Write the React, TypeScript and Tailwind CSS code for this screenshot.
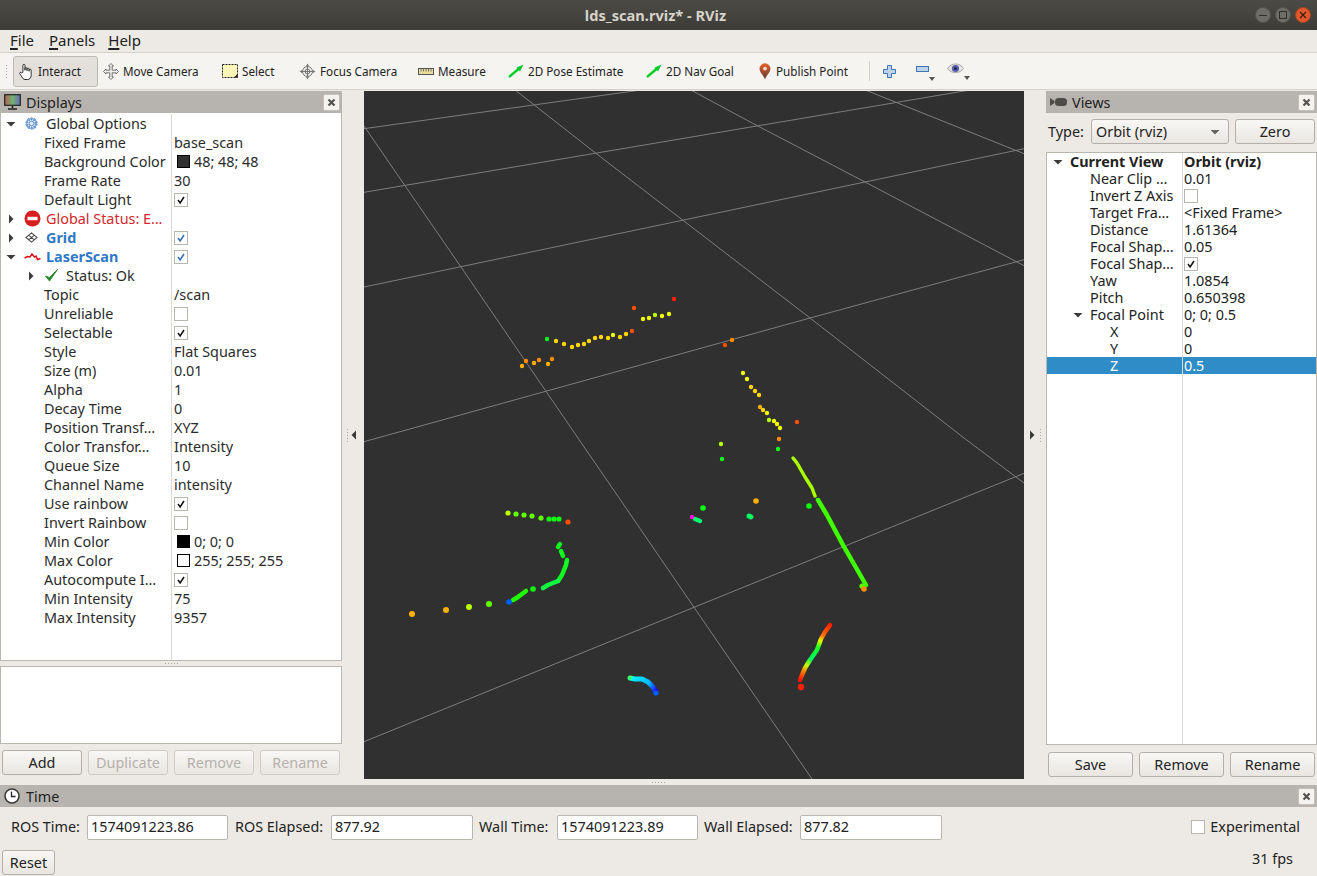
import { ReactNode } from 'react';

// colours of the laser points, picked off the screenshot
const C: Record<string, string> = {
  r: '#ff2000', R: '#ff5000', o: '#ff8c00', a: '#ffb000', y: '#ffd800', Y: '#f0ff00',
  l: '#b8ff00', g: '#60ff00', G: '#10ff10', t: '#00ff60', c: '#00e0ff', b: '#0060ff', m: '#ff10e0',
};

type Pt = [number, number, string, number?];

const scanPoints: Pt[] = [
  // top wall
  [547, 339, 'G'], [556, 341, 'y'], [564, 344, 'y'], [572, 347, 'y'], [578, 345, 'y'], [584, 344, 'y'], [589, 341, 'y'],
  [595, 338, 'y'], [601, 337, 'y'], [608, 338, 'y'], [613, 335, 'Y'], [620, 337, 'y'], [626, 334, 'y'], [632, 331, 'R'],
  [634, 308, 'R'], [674, 299, 'r'], [643, 319, 'Y'], [649, 318, 'Y'], [655, 315, 'l'], [662, 316, 'Y'], [669, 314, 'Y'],
  [522, 366, 'a'], [526, 361, 'o'], [534, 363, 'a'], [539, 360, 'o'], [548, 364, 'a'], [552, 359, 'o'],
  [725, 345, 'R'], [732, 340, 'o'],
  // right wall upper
  [743, 373, 'Y'], [747, 379, 'Y'], [751, 387, 'y'], [755, 391, 'y'], [759, 395, 'y'], [760, 407, 'a'], [763, 410, 'y'],
  [767, 413, 'Y'], [769, 420, 'l'], [774, 421, 'Y'], [777, 424, 'Y'], [780, 428, 'Y'], [797, 422, 'R'], [779, 439, 'o'], [778, 449, 'G'],
  [721, 444, 'l'], [722, 459, 'G'], [756, 501, 'a', 2.8], [809, 506, 'G', 2.8], [703, 508, 'G', 2.8],
  [862, 586, 'g', 2.6], [864, 589, 'o', 2.8],
  // left cluster
  [508, 513, 'l', 2.6], [516, 514, 'g', 2.6], [524, 515, 'g', 2.6], [532, 516, 'g', 2.6], [541, 518, 'g', 2.6], [549, 519, 'G', 2.6],
  [554, 519, 'G', 2.6], [559, 519, 'G', 2.6], [568, 522, 'R', 2.6],
  [533, 589, 'G', 2.8], [509, 602, 'b', 2.8], [489, 604, 'g', 3], [469, 607, 'l', 3], [446, 610, 'a', 3], [412, 614, 'a', 3],
  [692, 517, 'm', 2.2], [801, 687, 'r', 3.2], [656, 693, 'b', 2.6],
];

const scanLines: { pts: string; color: string; w: number }[] = [
  { pts: '793,458 797,463 805,477 812,488 815,496', color: '#a8ff00', w: 3.5 },
  { pts: '818,500 827,515 843,545 866,585', color: '#40ff00', w: 4.5 },
  { pts: '695,519 700,521', color: '#00ff70', w: 4.5 },
  { pts: '749,516 751,517', color: '#00ff60', w: 5 },
  { pts: '560,544 558,547', color: '#10ff20', w: 4.5 },
  { pts: '561,551 563,556', color: '#10ff20', w: 4.5 },
  { pts: '567,560 566,565 562,575 558,581', color: '#10ff20', w: 4.5 },
  { pts: '558,581 548,585 543,588', color: '#10ff40', w: 4.5 },
  { pts: '526,591 518,597 513,600', color: '#20ff00', w: 4.5 },
  { pts: '630,678 635,679 642,679 648,682 653,687 656,692', color: 'url(#arc)', w: 5 },
  { pts: '830,625 825,632 821,639 817,650 810,660 805,668 802,675 800,680', color: 'url(#rainbow)', w: 4.5 },
];

const gridLines = [
  '364,128.7 636,90.7',
  '364,192.3 966,90.7',
  '364,287 1024,148.7',
  '364,441.7 810,318 1024,259.7',
  '364,741.7 694,607.3 1024,473.3',
  '364,126 405,185.7 461,267 546,391.3 694,607.3 812,779',
  '516,90.7 596.4,153.7 683,220.3 810,318 964,438 1024,483',
  '692,90.7 758.4,126.3 865,182 1024,265.7',
  '867,90.7 1024,153.7',
];

const Viewport = () => (
  <div className="w-[660px] h-[688px] bg-[#303030] shrink-0">
    <svg className="block w-[660px] h-[688px]" viewBox="364 91 660 688">
      <defs>
        <linearGradient id="arc" gradientUnits="userSpaceOnUse" x1="630" y1="678" x2="656" y2="692">
          <stop offset="0" stopColor="#40ff60" />
          <stop offset="0.1" stopColor="#00f0ff" />
          <stop offset="0.65" stopColor="#00b8ff" />
          <stop offset="1" stopColor="#2000ff" />
        </linearGradient>
        <linearGradient id="rainbow" gradientUnits="userSpaceOnUse" x1="830" y1="625" x2="800" y2="680">
          <stop offset="0" stopColor="#ff2000" />
          <stop offset="0.2" stopColor="#ff7000" />
          <stop offset="0.3" stopColor="#e0ff00" />
          <stop offset="0.4" stopColor="#20ff20" />
          <stop offset="0.62" stopColor="#00ff60" />
          <stop offset="0.74" stopColor="#c0ff00" />
          <stop offset="0.85" stopColor="#ff8000" />
          <stop offset="1" stopColor="#ff1000" />
        </linearGradient>
      </defs>
      {gridLines.map((pts) => (
        <polyline key={pts} points={pts} fill="none" stroke="#7d7d7d" strokeWidth="1" />
      ))}
      {scanLines.map((l) => (
        <polyline key={l.pts} points={l.pts} fill="none" stroke={l.color} strokeWidth={l.w} strokeLinejoin="round" strokeLinecap="round" />
      ))}
      {scanPoints.map(([x, y, c, r = 2.2], i) => (
        <circle key={i} cx={x} cy={y} r={r} fill={C[c]} />
      ))}
    </svg>
  </div>
);

const Check = ({ color = '#111' }: { color?: string }) => (
  <svg className="w-[14px] h-[14px]" viewBox="0 0 14 14">
    <path d="M3.5 7 L6 10.5 L10.5 3.5" fill="none" stroke={color} strokeWidth="1.8" />
  </svg>
);

const CheckBox = ({ on, blue }: { on?: boolean; blue?: boolean }) => (
  <span className="w-[14px] h-[14px] bg-white border border-[#b9b6b0] flex items-center justify-center shrink-0">
    {on && <Check color={blue ? '#2f6fb5' : '#111'} />}
  </span>
);

const Swatch = ({ color }: { color: string }) => (
  <span className="w-[13px] h-[13px] border border-black shrink-0 mr-[4px] ml-[3px]" style={{ background: color }} />
);

const arrowPaths = {
  down: 'M0.5 3 H9.5 L5 7.5 z',
  right: 'M3 0.5 V9.5 L7.5 5 z',
  left: 'M7 0.5 V9.5 L2.5 5 z',
};

const Arrow = ({ dir = 'right', color = '#3c3c3c' }: { dir?: 'down' | 'right' | 'left'; color?: string }) => (
  <svg className="w-[10px] h-[10px] shrink-0" viewBox="0 0 10 10">
    <path d={arrowPaths[dir]} fill={color} />
  </svg>
);

const CloseBtn = () => (
  <span className="w-[17px] h-[17px] bg-[#f5f3f0] border border-[#c4c1bc] rounded-[2px] flex items-center justify-center shrink-0">
    <svg className="w-[9px] h-[9px]" viewBox="0 0 9 9">
      <path d="M1.5 1.5 L7.5 7.5 M7.5 1.5 L1.5 7.5" stroke="#55534f" strokeWidth="2.2" />
    </svg>
  </span>
);

const GearIcon = () => (
  <svg className="w-[15px] h-[15px]" viewBox="0 0 16 16">
    <circle cx="8" cy="8" r="5" fill="none" stroke="#4f82c4" strokeWidth="3" strokeDasharray="2 1.14" />
    <circle cx="8" cy="8" r="5.2" fill="none" stroke="#7ea6d8" strokeWidth="1.4" />
    <circle cx="8" cy="8" r="2.6" fill="#dbe7f5" stroke="#4f82c4" />
  </svg>
);

const ErrorIcon = () => (
  <svg className="w-[17px] h-[17px]" viewBox="0 0 17 17">
    <circle cx="8.5" cy="8.5" r="8" fill="#d71f1f" />
    <rect x="3.5" y="6.8" width="10" height="3.4" fill="#fff" />
  </svg>
);

const GridIcon = () => (
  <svg className="w-[15px] h-[15px]" viewBox="0 0 16 16">
    <path d="M8 3 L14 8 L8 13 L2 8 Z M5 5.5 L11 10.5 M11 5.5 L5 10.5" fill="none" stroke="#4a4a4a" strokeWidth="1.1" />
  </svg>
);

const ScanIcon = () => (
  <svg className="w-[17px] h-[15px]" viewBox="0 0 17 15">
    <path d="M0.5 9 L3.5 7.5 L6 8 L8 5 L10.5 8 L12 7 L13.5 10.5 L16.5 9.5" fill="none" stroke="#e01010" strokeWidth="1.5" />
  </svg>
);

const OkIcon = () => (
  <svg className="w-[15px] h-[15px]" viewBox="0 0 15 15">
    <path d="M1.5 8 L5.5 13 L13.5 1.5 L5.5 9.5 Z" fill="#2c8a30" stroke="#2c8a30" strokeWidth="1" strokeLinejoin="round" />
  </svg>
);

type DisplayRow = {
  label: string;
  value?: string;
  swatch?: string;
  check?: 'on' | 'off' | 'blue';
  arrow?: 'open' | 'closed';
  icon?: ReactNode;
  tone?: string;
  status?: boolean;
};

const displayRows: DisplayRow[] = [
  { label: 'Global Options', arrow: 'open', icon: <GearIcon /> },
  { label: 'Fixed Frame', value: 'base_scan' },
  { label: 'Background Color', value: '48; 48; 48', swatch: '#303030' },
  { label: 'Frame Rate', value: '30' },
  { label: 'Default Light', check: 'on' },
  { label: 'Global Status: E…', arrow: 'closed', icon: <ErrorIcon />, tone: 'text-[#d0282c]' },
  { label: 'Grid', arrow: 'closed', icon: <GridIcon />, tone: 'text-[#2f78c8] font-bold', check: 'blue' },
  { label: 'LaserScan', arrow: 'open', icon: <ScanIcon />, tone: 'text-[#2f78c8] font-bold', check: 'blue' },
  { label: 'Status: Ok', status: true, arrow: 'closed', icon: <OkIcon /> },
  { label: 'Topic', value: '/scan' },
  { label: 'Unreliable', check: 'off' },
  { label: 'Selectable', check: 'on' },
  { label: 'Style', value: 'Flat Squares' },
  { label: 'Size (m)', value: '0.01' },
  { label: 'Alpha', value: '1' },
  { label: 'Decay Time', value: '0' },
  { label: 'Position Transf…', value: 'XYZ' },
  { label: 'Color Transfor…', value: 'Intensity' },
  { label: 'Queue Size', value: '10' },
  { label: 'Channel Name', value: 'intensity' },
  { label: 'Use rainbow', check: 'on' },
  { label: 'Invert Rainbow', check: 'off' },
  { label: 'Min Color', value: '0; 0; 0', swatch: '#000000' },
  { label: 'Max Color', value: '255; 255; 255', swatch: '#ffffff' },
  { label: 'Autocompute I…', check: 'on' },
  { label: 'Min Intensity', value: '75' },
  { label: 'Max Intensity', value: '9357' },
];

const DisplayTreeRow = ({ row }: { row: DisplayRow }) => {
  const tone = row.tone ?? 'text-[#2b2b2b]';
  return (
    <div className="flex h-[19px] shrink-0 items-center whitespace-nowrap">
      <div className="w-[171px] h-full flex items-center border-r border-[#dcdad6] shrink-0 overflow-hidden">
        {row.status ? (
          <>
            <span className="w-[35px] flex justify-end shrink-0"><Arrow /></span>
            <span className="ml-[8px] w-[22px] shrink-0 flex justify-start">{row.icon}</span>
          </>
        ) : row.arrow ? (
          <>
            <span className="w-[15px] pl-[5px] shrink-0"><Arrow dir={row.arrow === 'open' ? 'down' : 'right'} /></span>
            <span className="ml-[8px] w-[22px] shrink-0">{row.icon}</span>
          </>
        ) : (
          <span className="w-[43px] shrink-0" />
        )}
        <span className={`${tone} pt-[2px]`}>{row.label}</span>
      </div>
      <div className="pl-[2px] flex items-center text-[#2b2b2b]">
        {row.swatch && <Swatch color={row.swatch} />}
        {row.value && <span className="pt-[2px]">{row.value}</span>}
        {row.check && <CheckBox on={row.check !== 'off'} blue={row.check === 'blue'} />}
      </div>
    </div>
  );
};

const viewRows: { label: string; value?: string; indent: number; check?: boolean; head?: boolean; open?: boolean; selected?: boolean }[] = [
  { label: 'Current View', value: 'Orbit (rviz)', indent: 23, head: true, open: true },
  { label: 'Near Clip …', value: '0.01', indent: 43 },
  { label: 'Invert Z Axis', indent: 43, check: false },
  { label: 'Target Fra…', value: '<Fixed Frame>', indent: 43 },
  { label: 'Distance', value: '1.61364', indent: 43 },
  { label: 'Focal Shap…', value: '0.05', indent: 43 },
  { label: 'Focal Shap…', indent: 43, check: true },
  { label: 'Yaw', value: '1.0854', indent: 43 },
  { label: 'Pitch', value: '0.650398', indent: 43 },
  { label: 'Focal Point', value: '0; 0; 0.5', indent: 43, open: true },
  { label: 'X', value: '0', indent: 63 },
  { label: 'Y', value: '0', indent: 63 },
  { label: 'Z', value: '0.5', indent: 63, selected: true },
];

const QtButton = ({ children, w, disabled }: { children: ReactNode; w: string; disabled?: boolean }) => (
  <span
    className={`${w} h-[25px] pt-[2px] rounded-[3px] border flex items-center justify-center shrink-0 bg-gradient-to-b from-[#f8f7f5] to-[#e9e6e1] ${
      disabled ? 'border-[#cfccc6] text-[#b4b1ac]' : 'border-[#b3b0a9] text-[#222]'
    }`}
  >
    {children}
  </span>
);

const PanelTitle = ({ icon, title, close = true }: { icon: ReactNode; title: string; close?: boolean }) => (
  <div className="h-[22px] bg-[#b7b3af] flex items-center pl-[3px] pr-[2px] shrink-0">
    <span className="w-[18px] flex justify-center shrink-0">{icon}</span>
    <span className="ml-[5px] flex-1 text-[#222] pt-[2px]">{title}</span>
    {close && <CloseBtn />}
  </div>
);

const ToolBtn = ({ icon, label, w, active, gap = 'gap-1' }: { icon: ReactNode; label: string; w: string; active?: boolean; gap?: string }) => (
  <div
    className={`${w} h-[31px] pl-[4px] flex items-center ${gap} shrink-0 whitespace-nowrap text-[11.7px] text-[#222] ${
      active ? 'bg-[#e3e0dc] border border-[#bcb9b3] rounded-[3px]' : 'border border-transparent'
    }`}
  >
    <span className="w-[16px] h-[16px] flex items-center justify-center shrink-0">{icon}</span>
    <span className="pt-[2px]">{label}</span>
  </div>
);

const HandIcon = () => (
  <svg className="w-[16px] h-[17px] shrink-0" viewBox="0.5 0 13 16.5">
    <path
      d="M4 9 V2.3 a1 1 0 0 1 2 0 V7 V5.5 a1 1 0 0 1 2 0 V7.5 V6 a1 1 0 0 1 2 0 V8 V7 a1 1 0 0 1 2 0 V12 c0 2.5-1.5 4-3.5 4 H6 c-1.5 0-2-1-3-2.5 L1 10.5 c-0.6-1 0.8-2 1.6-1 Z"
      fill="#fff"
      stroke="#222"
      strokeWidth="0.9"
    />
  </svg>
);

const MoveIcon = () => (
  <svg className="w-[16px] h-[17px] shrink-0" viewBox="0 0 16 17">
    <path
      d="M8 .5 L10.5 3 H9.2 V7.2 H13 V6 L15.5 8.5 L13 11 V9.8 H9.2 V14 H10.5 L8 16.5 L5.5 14 H6.8 V9.8 H3 V11 L.5 8.5 L3 6 V7.2 H6.8 V3 H5.5 Z"
      fill="#eeeeee"
      stroke="#555"
      strokeWidth="0.8"
    />
  </svg>
);

const SelectIcon = () => (
  <svg className="w-[16px] h-[14px]" viewBox="0 0 16 14">
    <rect x="0.5" y="0.5" width="15" height="13" fill="#fbf6b8" stroke="#222" strokeDasharray="2 1" />
    <path d="M12 13.5 L15.5 13.5 L15.5 10 Z" fill="#111" />
  </svg>
);

const FocusIcon = () => (
  <svg className="w-[17px] h-[17px] shrink-0" viewBox="0 0 17 17">
    <circle cx="8.5" cy="8.5" r="5" fill="#ececec" stroke="#777" />
    <circle cx="8.5" cy="8.5" r="2.4" fill="none" stroke="#777" />
    <path d="M8.5 .5 L10 3 H9 V14 H10 L8.5 16.5 L7 14 H8 V3 H7 Z M.5 8.5 L3 7 V8 H14 V7 L16.5 8.5 L14 10 V9 H3 V10 Z" fill="#777" />
  </svg>
);

const RulerIcon = () => (
  <svg className="w-[16px] h-[7px]" viewBox="0 0 16 7">
    <rect x="0.5" y="0.5" width="15" height="6" fill="#e9dc9f" stroke="#555" />
    <path d="M3 1 V3.5 M5.5 1 V3.5 M8 1 V3.5 M10.5 1 V3.5 M13 1 V3.5" stroke="#555" strokeWidth="0.8" />
  </svg>
);

const GreenArrow = () => (
  <svg className="w-[16px] h-[14px]" viewBox="0 0 16 14">
    <path d="M1 13 L11 4.5" stroke="#10e030" strokeWidth="2.6" />
    <path d="M15.5 0.5 L8.5 3.5 L12 7.5 Z" fill="#10c830" />
    <path d="M1 13 L10 5.5" stroke="#0a8a20" strokeWidth="0.6" />
  </svg>
);

const PinIcon = () => (
  <svg className="w-[12px] h-[17px] mr-[4px] shrink-0" viewBox="0 0 12 17">
    <defs>
      <linearGradient id="pin" x1="0" y1="0" x2="0" y2="1">
        <stop offset="0" stopColor="#e8602c" />
        <stop offset="1" stopColor="#5a4030" />
      </linearGradient>
    </defs>
    <path d="M6 16.5 C4.5 12 .5 9.5 .5 5.8 A5.5 5.5 0 0 1 11.5 5.8 C11.5 9.5 7.5 12 6 16.5 Z" fill="url(#pin)" />
    <circle cx="6" cy="5.6" r="1.9" fill="#f3d9c8" />
  </svg>
);

const MonitorIcon = () => (
  <svg className="w-[17px] h-[16px]" viewBox="0 0 17 16">
    <defs>
      <linearGradient id="screen" x1="0" y1="0" x2="1" y2="0">
        <stop offset="0" stopColor="#b85a5a" />
        <stop offset="0.5" stopColor="#6fb56f" />
        <stop offset="1" stopColor="#6a6ab8" />
      </linearGradient>
    </defs>
    <rect x="0.7" y="0.7" width="15.6" height="10.6" fill="url(#screen)" stroke="#222" strokeWidth="1.2" />
    <path d="M8.5 12 V14 M4 15 H13" stroke="#222" strokeWidth="1.6" />
  </svg>
);

const CameraIcon = () => (
  <svg className="w-[17px] h-[10px]" viewBox="0 0 17 10">
    <path d="M0 1 L4.5 4 V6 L0 9 Z" fill="#4d4c49" />
    <rect x="5" y="1" width="12" height="8" rx="3.5" fill="#4d4c49" />
  </svg>
);

const ClockIcon = () => (
  <svg className="w-[16px] h-[16px]" viewBox="0 0 16 16">
    <circle cx="8" cy="8" r="7" fill="#fff" stroke="#3a3a3a" strokeWidth="1.6" />
    <path d="M7.5 3.5 V8.5 H11.5" fill="none" stroke="#222" strokeWidth="1.3" />
  </svg>
);

const TimeField = ({ label, value, labelW, inputW }: { label: string; value: string; labelW: string; inputW: string }) => (
  <>
    <span className={`${labelW} shrink-0 text-[#222] whitespace-nowrap`}>{label}</span>
    <span className={`${inputW} h-[25px] shrink-0 bg-white border border-[#b9b6b0] rounded-[2px] pl-[3px] flex items-center text-[#222]`}>
      {value}
    </span>
  </>
);

const DragDots = ({ vertical }: { vertical?: boolean }) => (
  <span className={`flex ${vertical ? 'flex-col' : ''} gap-[2px]`}>
    {[0, 1, 2, 3, 4].map((i) => (
      <span key={i} className="w-px h-px bg-[#a9a6a0]" />
    ))}
  </span>
);

export default function App() {
  return (
    <div
      className="w-[1317px] h-[876px] overflow-hidden flex flex-col bg-[#edeae5] text-[14.4px] leading-none"
      style={{ fontFamily: '"Noto Sans", sans-serif' }}
    >
      {/* window title */}
      <div className="h-[30px] shrink-0 bg-gradient-to-b from-[#4d4b45] to-[#3d3c38] flex items-center">
        <div className="flex-1" />
        <span className="font-bold text-[14.6px] text-[#d6d3ca]">lds_scan.rviz* - RViz</span>
        <div className="flex-1 flex justify-end items-center gap-[4px] pr-[6px]">
          <span className="w-[16px] h-[16px] rounded-full bg-[#6e6d67] border border-[#55544f] flex items-center justify-center">
            <span className="w-[8px] h-px bg-[#2f2e2b]" />
          </span>
          <span className="w-[16px] h-[16px] rounded-full bg-[#6e6d67] border border-[#55544f] flex items-center justify-center">
            <span className="w-[8px] h-[8px] border border-[#2f2e2b]" />
          </span>
          <span className="w-[16px] h-[16px] rounded-full bg-[#e3582a] border border-[#a8441f] flex items-center justify-center">
            <svg className="w-[8px] h-[8px]" viewBox="0 0 8 8">
              <path d="M1 1 L7 7 M7 1 L1 7" stroke="#3a1a0c" strokeWidth="1.2" />
            </svg>
          </span>
        </div>
      </div>

      {/* menu */}
      <div className="h-[22px] shrink-0 flex items-center pl-[10px] pb-[2px] gap-[15px] text-[15px] text-[#222]">
        <span><span className="underline underline-offset-2 decoration-2">F</span>ile</span>
        <span><span className="underline underline-offset-2 decoration-2">P</span>anels</span>
        <span className="-ml-[2px]"><span className="underline underline-offset-2 decoration-2">H</span>elp</span>
      </div>

      {/* toolbar */}
      <div className="h-[38px] shrink-0 bg-[#f6f4f0] border-t border-b border-[#d5d2cc] flex items-center pl-[6px]">
        <span className="w-[7px] shrink-0 flex justify-start"><DragDots vertical /></span>
        <ToolBtn w="w-[85px]" active label="Interact" icon={<HandIcon />} />
        <ToolBtn w="w-[119px]" label="Move Camera" icon={<MoveIcon />} />
        <ToolBtn w="w-[77px]" label="Select" icon={<SelectIcon />} />
        <ToolBtn w="w-[119px]" label="Focus Camera" icon={<FocusIcon />} gap="gap-[5px]" />
        <ToolBtn w="w-[90px]" label="Measure" icon={<RulerIcon />} />
        <ToolBtn w="w-[138px]" label="2D Pose Estimate" icon={<GreenArrow />} />
        <ToolBtn w="w-[113px]" label="2D Nav Goal" icon={<GreenArrow />} />
        <ToolBtn w="w-[111px]" label="Publish Point" icon={<PinIcon />} gap="gap-[1px]" />
        <span className="ml-[4px] w-px h-[20px] bg-[#d5d2cc] shrink-0" />
        <span className="ml-[13px] w-[13px] h-[13px] shrink-0">
          <svg viewBox="0 0 13 13" className="w-[13px] h-[13px]">
            <path d="M4.5 .5 H8.5 V4.5 H12.5 V8.5 H8.5 V12.5 H4.5 V8.5 H.5 V4.5 H4.5 Z" fill="#bcd3ee" stroke="#3d74b5" />
          </svg>
        </span>
        <span className="ml-[20px] w-[19px] h-[20px] shrink-0 flex flex-col items-start">
          <svg viewBox="0 0 13 6" className="w-[13px] h-[6px] mt-[5px]">
            <rect x=".5" y=".5" width="12" height="5" fill="#bcd3ee" stroke="#3d74b5" />
          </svg>
          <svg viewBox="0 0 6 4" className="w-[6px] h-[4px] self-end mt-[5px]">
            <path d="M0 0 H6 L3 4 Z" fill="#555" />
          </svg>
        </span>
        <span className="ml-[12px] w-[23px] h-[20px] shrink-0 flex flex-col items-start">
          <svg viewBox="0 0 17 11" className="w-[17px] h-[11px] mt-[2px]">
            <path d="M.5 5.5 C4 -0.5 13 -0.5 16.5 5.5 C13 11 4 11 .5 5.5 Z" fill="#e3e3e3" stroke="#a9a9a9" />
            <circle cx="8.5" cy="5.5" r="3.6" fill="#5660a8" />
            <circle cx="8.5" cy="5.5" r="1.5" fill="#20244f" />
          </svg>
          <svg viewBox="0 0 6 4" className="w-[6px] h-[4px] self-end mt-[2px]">
            <path d="M0 0 H6 L3 4 Z" fill="#555" />
          </svg>
        </span>
      </div>

      <div className="h-px shrink-0" />

      {/* main area */}
      <div className="h-[688px] shrink-0 flex">
        {/* displays */}
        <div className="w-[342px] shrink-0 flex flex-col">
          <PanelTitle icon={<MonitorIcon />} title="Displays" />
          <div className="h-[548px] shrink-0 bg-white border border-[#bab7b1] border-t-0 pt-px flex flex-col overflow-hidden">
            {displayRows.map((row) => (
              <DisplayTreeRow key={row.label} row={row} />
            ))}
            <div className="flex-1 ml-[170px] border-r border-[#dcdad6] w-px" />
          </div>
          <div className="h-[5px] shrink-0 flex items-center justify-center"><DragDots /></div>
          <div className="h-[78px] shrink-0 bg-white border border-[#bab7b1]" />
          <div className="mt-[6px] flex gap-[6px] pl-[2px]">
            <QtButton w="w-[80px]">Add</QtButton>
            <QtButton w="w-[80px]" disabled>Duplicate</QtButton>
            <QtButton w="w-[80px]" disabled>Remove</QtButton>
            <QtButton w="w-[80px]" disabled>Rename</QtButton>
          </div>
        </div>

        <div className="w-[22px] shrink-0 flex items-center justify-center gap-[1px]">
          <DragDots vertical />
          <Arrow dir="left" color="#3a3a3a" />
        </div>

        <Viewport />

        <div className="w-[22px] shrink-0 flex items-center justify-center gap-[3px] pr-[3px]">
          <Arrow color="#3a3a3a" />
          <DragDots vertical />
        </div>

        {/* views */}
        <div className="w-[271px] shrink-0 flex flex-col">
          <PanelTitle icon={<CameraIcon />} title="Views" />
          <div className="h-[39px] shrink-0 flex items-center pl-[2px] pr-[2px] pb-[2px] text-[#222]">
            <span className="w-[43px] shrink-0 pt-[2px]">Type:</span>
            <span className="w-[138px] h-[25px] shrink-0 rounded-[3px] border border-[#b3b0a9] bg-gradient-to-b from-[#f8f7f5] to-[#e9e6e1] pl-[4px] pr-[8px] flex items-center justify-between">
              <span className="pt-[2px]">Orbit (rviz)</span>
              <Arrow dir="down" color="#666" />
            </span>
            <span className="ml-[6px]">
              <QtButton w="w-[80px]">Zero</QtButton>
            </span>
          </div>
          <div className="h-[593px] shrink-0 bg-white border border-[#bab7b1] flex flex-col w-[271px] overflow-hidden">
            {viewRows.map((r, i) => (
              <div
                key={i}
                className={`h-[17px] shrink-0 flex items-center whitespace-nowrap ${r.selected ? 'bg-[#308cc6] text-white' : 'text-[#222]'} ${r.head ? 'font-bold' : ''}`}
              >
                <div className="w-[136px] h-full shrink-0 border-r border-[#dcdad6] flex items-center relative">
                  <span className="w-[23px] pl-[7px] shrink-0" />
                  {r.open && (
                    <span className={r.head ? 'absolute left-[6px]' : 'absolute left-[26px]'}>
                      <Arrow dir="down" />
                    </span>
                  )}
                  <span className="pt-[2px]" style={{ marginLeft: r.indent - 23 }}>{r.label}</span>
                </div>
                <div className="pl-[1px] flex items-center">
                  {r.value && <span className="pt-[2px]">{r.value}</span>}
                  {r.check !== undefined && <CheckBox on={r.check} />}
                </div>
              </div>
            ))}
            <div className="flex-1 ml-[135px] border-r border-[#dcdad6] w-px" />
          </div>
          <div className="mt-[7px] flex gap-[6px] pl-[2px]">
            <QtButton w="w-[85px]">Save</QtButton>
            <QtButton w="w-[85px]">Remove</QtButton>
            <QtButton w="w-[85px]">Rename</QtButton>
          </div>
        </div>
      </div>

      <div className="h-[6px] shrink-0 flex items-center justify-center"><DragDots /></div>

      {/* time panel */}
      <PanelTitle icon={<ClockIcon />} title="Time" />
      <div className="h-[36px] shrink-0 flex items-center pl-[11px] pr-[17px] pt-[4px]">
        <TimeField label="ROS Time:" value="1574091223.86" labelW="w-[76px]" inputW="w-[141px]" />
        <span className="w-[7px]" />
        <TimeField label="ROS Elapsed:" value="877.92" labelW="w-[96px]" inputW="w-[142px]" />
        <span className="w-[6px]" />
        <TimeField label="Wall Time:" value="1574091223.89" labelW="w-[78px]" inputW="w-[141px]" />
        <span className="w-[6px]" />
        <TimeField label="Wall Elapsed:" value="877.82" labelW="w-[96px]" inputW="w-[142px]" />
        <span className="flex-1" />
        <CheckBox />
        <span className="ml-[5px] text-[#222]">Experimental</span>
      </div>
      <div className="flex-1 flex items-center justify-between pl-[2px] pr-[24px] pt-[6px]">
        <QtButton w="w-[53px]">Reset</QtButton>
        <span className="text-[#222] mb-[7px]">31 fps</span>
      </div>
    </div>
  );
}
